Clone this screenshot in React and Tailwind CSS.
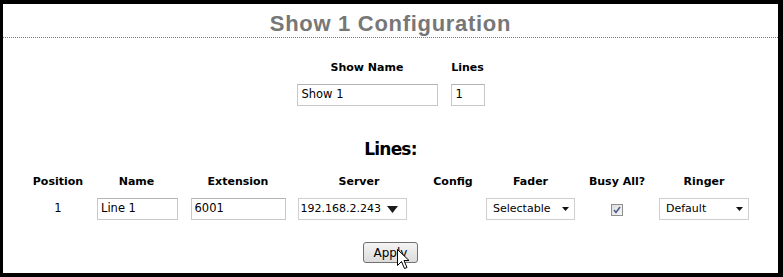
import React from "react";

const body = { fontFamily: '"DejaVu Sans", Verdana, sans-serif' };

function TextBox({ value, w, pl = "pl-[3px]" }) {
  return (
    <div
      className={`h-[22px] ${w} ${pl} flex items-center border border-[#c8c8c8] border-t-[#b4b4b4] bg-white text-[11.5px] text-black shrink-0`}
    >
      {value}
    </div>
  );
}

function SmallArrow() {
  return (
    <svg width="7" height="4" viewBox="0 0 7 4" className="shrink-0">
      <path d="M0 0 H7 L3.5 4 Z" fill="#111" />
    </svg>
  );
}

function SelectBox({ value, w, extra = "" }) {
  return (
    <div
      className={`h-[22px] ${w} ${extra} pl-[6px] pr-[5px] flex items-center justify-between border border-[#cfcfcf] bg-white text-[11px] text-black shrink-0`}
    >
      <span>{value}</span>
      <SmallArrow />
    </div>
  );
}

const cols = ["w-[80px]", "w-[77px]", "w-[126px]", "w-[116px]", "w-[72px]", "w-[83px]", "w-[90px]", "w-[84px]"];
const headers = ["Position", "Name", "Extension", "Server", "Config", "Fader", "Busy All?", "Ringer"];

export default function App() {
  return (
    <div className="w-[783px] h-[277px] bg-black pt-[4px] pl-[3px] pr-[5px] pb-[4px]" style={body}>
      <div className="w-[775px] h-[269px] bg-white flex flex-col">
        <div className="pt-[8px] pb-[1px] border-b border-dotted border-[#7a7a7a]">
          <div
            className="h-[24px] leading-[24px] text-center text-[22px] font-bold tracking-[0.7px] text-[#777777]"
            style={{ fontFamily: '"Liberation Sans", Arial, sans-serif' }}
          >
            Show 1 Configuration
          </div>
        </div>

        <div className="mt-[23px] flex justify-center gap-[13px]">
          <div className="flex flex-col items-center gap-[9px]">
            <div className="h-[14px] leading-[14px] text-[11px] font-bold text-black">Show Name</div>
            <TextBox value="Show 1" w="w-[141px]" pl="pl-[4px]" />
          </div>
          <div className="flex flex-col items-center gap-[9px]">
            <div className="h-[14px] leading-[14px] text-[11px] font-bold text-black">Lines</div>
            <TextBox value="1" w="w-[34px]" pl="pl-[4px]" />
          </div>
        </div>

        <div className="mt-[33px] h-[20px] leading-[20px] text-center text-[17px] font-bold tracking-[-0.8px] text-black">
          Lines:
        </div>

        <div className="mt-[16px] pl-[15px] flex">
          {headers.map((h, i) => (
            <div key={h} className={`${cols[i]} flex justify-center h-[14px] leading-[14px] text-[11px] font-bold text-black whitespace-nowrap`}>
              {h}
            </div>
          ))}
        </div>

        <div className="mt-[9px] pl-[15px] flex h-[22px]">
          <div className={`${cols[0]} flex justify-center items-center text-[11.5px] text-black`}>1</div>
          <div className={`${cols[1]} flex justify-center`}>
            <div className="ml-[2px]">
              <TextBox value="Line 1" w="w-[81px]" />
            </div>
          </div>
          <div className={`${cols[2]} flex justify-center`}>
            <TextBox value="6001" w="w-[95px]" />
          </div>
          <div className={`${cols[3]} flex justify-center`}>
            <div className="mr-[14px] h-[22px] w-[109px] shrink-0 pl-[2px] pr-[8px] flex items-center justify-between border border-[#cfcfcf] bg-white text-[11px] text-black">
              <span>192.168.2.243</span>
              <svg width="11" height="7" viewBox="0 0 11 7" className="shrink-0">
                <path d="M0 0 H11 L5.5 7 Z" fill="#1a1a1a" />
              </svg>
            </div>
          </div>
          <div className={`${cols[4]}`} />
          <div className={`${cols[5]} flex justify-center`}>
            <SelectBox value="Selectable" w="w-[89px]" />
          </div>
          <div className={`${cols[6]} flex justify-center items-center`}>
            <svg width="12" height="12" viewBox="0 0 12 12" className="mt-[1px]">
              <defs>
                <linearGradient id="cbg" x1="0" y1="0" x2="1" y2="1">
                  <stop offset="0" stopColor="#dcdcdc" />
                  <stop offset="1" stopColor="#f8f8f8" />
                </linearGradient>
              </defs>
              <rect x="0.5" y="0.5" width="11" height="11" fill="url(#cbg)" stroke="#8e8f8f" />
              <path d="M3 6 L5 8.5 L9 3" fill="none" stroke="#4a5f8e" strokeWidth="1.6" />
            </svg>
          </div>
          <div className={`${cols[7]} flex justify-center`}>
            <SelectBox value="Default" w="w-[90px]" />
          </div>
        </div>

        <div className="mt-[22px] flex justify-center">
          <div className="relative">
            <div className="h-[21px] w-[55px] rounded-[3px] border border-[#707070] bg-gradient-to-b from-[#f4f4f4] to-[#dcdcdc] flex items-center justify-center text-[12px] text-black">
              Apply
            </div>
            <svg
              width="13"
              height="21"
              viewBox="0 0 13 21"
              className="absolute left-[34px] top-[7px]"
            >
              <path
                d="M0.5 0.5 L0.5 16.5 L4.5 12.5 L7.5 19.5 L10 18.5 L7 11.5 L12 11.5 Z"
                fill="#ffffff"
                stroke="#000000"
                strokeWidth="1"
                strokeLinejoin="miter"
              />
            </svg>
          </div>
        </div>
      </div>
    </div>
  );
}
